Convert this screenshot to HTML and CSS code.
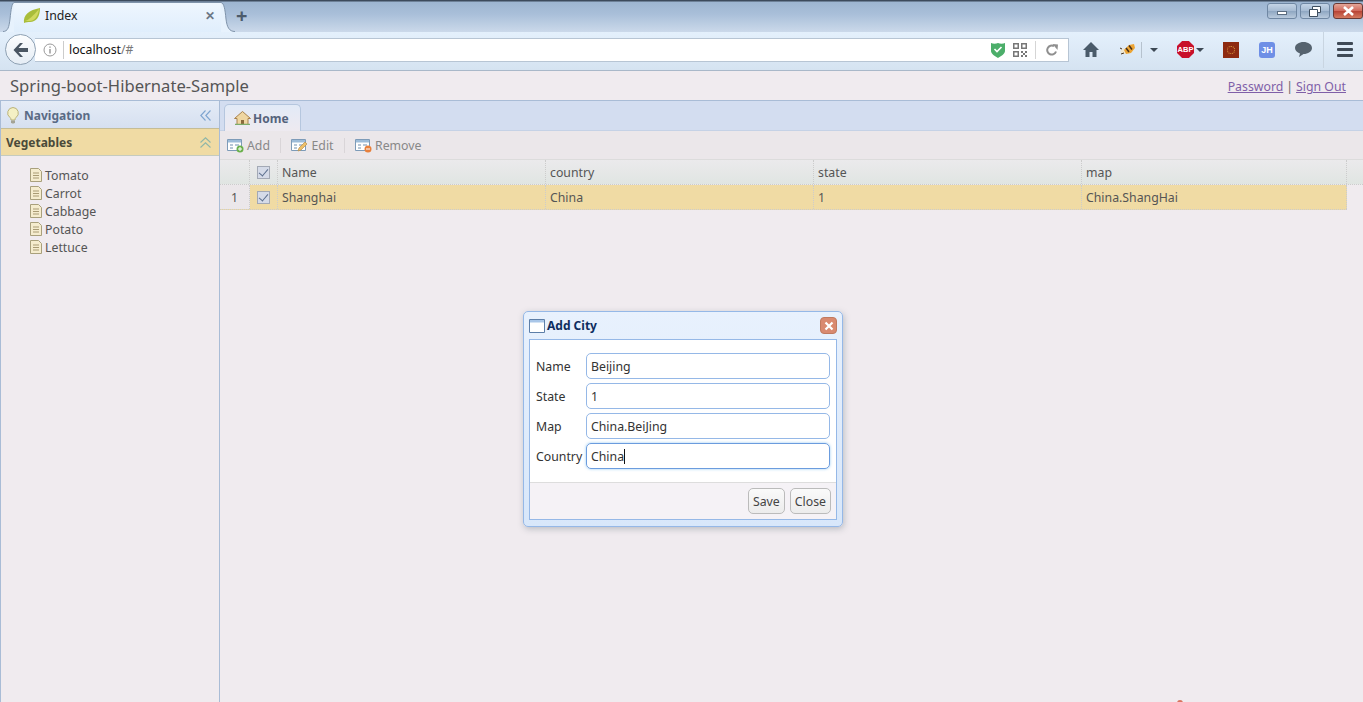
FILE: index.html
```html
<!DOCTYPE html>
<html>
<head>
    <meta charset="UTF-8">
    <title>Index</title>
    <link rel="stylesheet" href="styles.css">
</head>
<body>
    <div class="browser">
        <div class="tabstrip">
            <div class="tab">
                <svg class="tab-curve" width="11" height="30" viewBox="0 0 11 30"><path d="M0 29.500C5 29.500 6 25 7 17 8 7 9 1 11 .5V30H0z" fill="#e7f2fd"/><path d="M0 29.500C5 29.500 6 25 7 17 8 7 9 1 11 .5" fill="none" stroke="#7f93aa"/></svg>
                <div class="tab-main">
                    <svg class="tab-leaf" width="18" height="17" viewBox="0 0 18 17"><path d="M1 16C0 8 6 3 17 1c0 9-4 14-10 14-2 0-4 0-6 1z" fill="#a9bd3a"/><path d="M2 14C6 13 10 9 16 2c-1 8-5 12-9 12-2 0-3 0-5 0z" fill="#d0d95f"/></svg>
                    <span class="tab-title">Index</span>
                    <span class="tab-close">&#10005;</span>
                </div>
                <svg class="tab-curve" width="14" height="30" viewBox="0 0 14 30"><path d="M14 29.500C8 29.500 6 25 5 17 4 7 3 1 0 .5V30H14z" fill="#e7f2fd"/><path d="M14 29.500C8 29.500 6 25 5 17 4 7 3 1 0 .5" fill="none" stroke="#7f93aa"/></svg>
            </div>
            <span class="tab-new">+</span>
            <div class="window-btns">
                <span class="win-btn"><i class="win-min"></i></span>
                <span class="win-btn"><svg width="12" height="11" viewBox="0 0 12 11"><path d="M3.500 3V.5h8v6H9M.5 3.500h8v7h-8z" fill="#fff" stroke="#3f4f60"/></svg></span>
                <span class="win-btn win-close"><svg width="13" height="10" viewBox="0 0 13 10"><path d="M2 1l9 8M11 1L2 9" stroke="#fff" stroke-width="2.600"/></svg></span>
            </div>
        </div>
        <div class="navbar">
            <span class="back-btn">
                <svg width="18" height="16" viewBox="0 0 18 16"><path d="M8 1L1.500 8 8 15h3L6.500 10H16V6H6.500L11 1z" fill="#4a5663"/></svg>
            </span>
            <div class="urlbar">
                <svg class="info-icon" width="14" height="14" viewBox="0 0 14 14"><circle cx="7" cy="7" r="6" fill="none" stroke="#9a9a9a"/><path d="M7 6v4.500M7 3.500v1.300" stroke="#8a8a8a" stroke-width="1.300"/></svg>
                <span class="url"><b>localhost</b>/#</span>
                <svg class="shield" width="14" height="16" viewBox="0 0 14 16"><path d="M0 1c2 1 5 1 7 0 2 1 5 1 7 0v8c0 3-4 5-7 7-3-2-7-4-7-7z" fill="#4cae6a"/><path d="M3.500 7l2.500 2.500L10.500 5" fill="none" stroke="#fff" stroke-width="1.600"/></svg>
                <svg class="qr" width="14" height="14" viewBox="0 0 14 14"><path d="M0 0h6v6H0zM1.500 1.500v3h3v-3zM8 0h6v6H8zM9.500 1.500v3h3v-3zM0 8h6v6H0zM1.500 9.500v3h3v-3zM8 8h2v2H8zM12 8h2v2h-2zM10 10h2v2h-2zM8 12h2v2H8zM12 12h2v2h-2z" fill="#777" fill-rule="evenodd"/></svg>
                <span class="reload">
                    <svg width="12" height="12" viewBox="0 0 12 12"><path d="M10 7.500A4.500 4.500 0 1 1 8 2.200" fill="none" stroke="#8f8f8f" stroke-width="2"/><path d="M6.500 0L12 .5 11.500 6z" fill="#8f8f8f"/></svg>
                </span>
            </div>
            <div class="nav-icons">
                <svg class="home-icon" width="16" height="15" viewBox="0 0 16 15"><path d="M8 0L0 8h2.500v7h4v-5h3v5h4V8H16z" fill="#4a5b6a"/></svg>
                <svg class="bug-icon" width="17" height="13" viewBox="0 0 17 13"><path d="M1 9l3-4 4 2-2 4z" fill="#efe6cf"/><path d="M5 7l5-5 5-1 1 4-4 5-5 1z" fill="#eda534"/><path d="M7 5l3 4M10 2.500l3 4" stroke="#46301a" stroke-width="1.500"/><path d="M1 5l2 1M2 11l3-1" stroke="#46301a"/></svg>
                <i class="nav-sep"></i>
                <i class="caret caret-first"></i>
                <span class="abp">ABP</span>
                <i class="caret"></i>
                <span class="square-red"><i></i></span>
                <span class="square-jh">JH</span>
                <svg class="chat-icon" width="17" height="15" viewBox="0 0 17 15"><path d="M8.500 0C13 0 17 2.500 17 6s-4 6-8.500 6L4 15l1-3.500C2 10.500 0 8.500 0 6c0-3.500 4-6 8.500-6z" fill="#56636f"/></svg>
                <i class="nav-sep nav-sep-menu"></i>
                <span class="menu-icon"><i></i><i></i><i></i></span>
            </div>
        </div>
    </div>

    <div class="page-head">
        <div class="app-title">Spring-boot-Hibernate-Sample</div>
        <div class="user-links"><a href="#">Password</a><span class="link-sep">|</span><a href="#">Sign Out</a></div>
    </div>

    <div class="layout">
        <aside class="sidebar">
            <div class="panel-title">
                <svg class="bulb" width="12" height="17" viewBox="0 0 12 17"><path d="M6 .5a5.500 5.500 0 0 1 3 10c-.7.6-1 1.300-1 2.500H4c0-1.200-.3-1.900-1-2.500a5.500 5.500 0 0 1 3-10z" fill="#f4f0c4" stroke="#b9b27a"/><path d="M4 13.500h4v2l-1 1H5l-1-1z" fill="#a3a396"/></svg>
                <span>Navigation</span>
                <svg class="chevrons" width="11" height="11" viewBox="0 0 11 11"><path d="M5.500 .5L.8 5.500l4.700 5M10.500 .5L5.800 5.500l4.700 5" fill="none" stroke="#7ea5d0" stroke-width="1.100"/></svg>
            </div>
            <div class="accordion-head">
                <span>Vegetables</span>
                <svg class="chevrons" width="11" height="11" viewBox="0 0 11 11"><path d="M.5 5.500L5.500 .8l5 4.700M.5 10.500L5.500 5.800l5 4.700" fill="none" stroke="#8fb6a8" stroke-width="1.100"/></svg>
            </div>
            <ul class="tree">
                <li><svg width="12" height="14" viewBox="0 0 12 14"><use href="#file"/></svg>Tomato</li>
                <li><svg width="12" height="14" viewBox="0 0 12 14"><use href="#file"/></svg>Carrot</li>
                <li><svg width="12" height="14" viewBox="0 0 12 14"><use href="#file"/></svg>Cabbage</li>
                <li><svg width="12" height="14" viewBox="0 0 12 14"><use href="#file"/></svg>Potato</li>
                <li><svg width="12" height="14" viewBox="0 0 12 14"><use href="#file"/></svg>Lettuce</li>
            </ul>
        </aside>

        <main class="content">
            <div class="tabs-bar">
                <div class="home-tab">
                    <svg width="17" height="14" viewBox="0 0 17 14"><path d="M8.500 .5L.5 7.500h2.500v6h11v-6h2.500z" fill="#efd6a2" stroke="#a8824c"/><path d="M7 9h3v4.500H7z" fill="#8a6a3c"/><path d="M1 13.500h15" stroke="#7cab6a" stroke-width="1.500"/></svg>
                    <span>Home</span>
                </div>
            </div>
            <div class="toolbar">
                <span class="tool"><svg width="17" height="15" viewBox="0 0 17 15"><use href="#grid"/><circle cx="13" cy="11" r="3.500" fill="#6ab04c"/><path d="M11 11h4M13 9v4" stroke="#fff"/></svg>Add</span>
                <i class="tool-sep"></i>
                <span class="tool"><svg width="17" height="15" viewBox="0 0 17 15"><use href="#grid"/><path d="M7 13l1-3 6-6 2 2-6 6z" fill="#eec06a" stroke="#b98f4a" stroke-width=".7"/></svg>Edit</span>
                <i class="tool-sep"></i>
                <span class="tool"><svg width="17" height="15" viewBox="0 0 17 15"><use href="#grid"/><circle cx="13" cy="11" r="3.500" fill="#e8803c"/><path d="M11 11h4" stroke="#fff"/></svg>Remove</span>
            </div>
            <div class="grid">
                <div class="grid-row grid-header">
                    <div class="cell cell-num"></div>
                    <div class="cell cell-check"><span class="check"></span></div>
                    <div class="cell cell-data">Name</div>
                    <div class="cell cell-data">country</div>
                    <div class="cell cell-data">state</div>
                    <div class="cell cell-data cell-last">map</div>
                </div>
                <div class="grid-row grid-selected">
                    <div class="cell cell-num">1</div>
                    <div class="cell cell-check"><span class="check"></span></div>
                    <div class="cell cell-data">Shanghai</div>
                    <div class="cell cell-data">China</div>
                    <div class="cell cell-data">1</div>
                    <div class="cell cell-data cell-last">China.ShangHai</div>
                </div>
            </div>
        </main>
    </div>

    <div class="dialog">
        <div class="dialog-title">
            <svg width="16" height="14" viewBox="0 0 16 14"><path d="M.5 .5h15v13H.5z" fill="#fff" stroke="#5c7ea8"/><path d="M1 1h14v2.500H1z" fill="#a9c6e8"/></svg>
            <span>Add City</span>
            <span class="dialog-close"><svg width="10" height="10" viewBox="0 0 10 10"><path d="M1.500 1.500l7 7M8.500 1.500l-7 7" stroke="#fff" stroke-width="2.200"/></svg></span>
        </div>
        <div class="dialog-body">
            <form class="city-form">
                <label>Name</label><div class="field">Beijing</div>
                <label>State</label><div class="field">1</div>
                <label>Map</label><div class="field">China.BeiJing</div>
                <label>Country</label><div class="field field-focus">China<i class="cursor"></i></div>
            </form>
            <div class="dialog-buttons">
                <span class="btn">Save</span>
                <span class="btn">Close</span>
            </div>
        </div>
    </div>

    <i class="red-dot"></i>

    <svg class="defs" width="0" height="0">
        <defs>
            <g id="file"><path d="M.5 .5h8l3 3v10H.5z" fill="#f5ecce" stroke="#a9a07c"/><path d="M3 5h6M3 7.500h6M3 10h6" stroke="#a99b74"/></g>
            <g id="grid"><path d="M.5 1.500h14v11H.5z" fill="#fff" stroke="#7d9bb8"/><path d="M1 2h13v2.500H1z" fill="#9dbcd9"/><path d="M3 7h3M3 10h3M8 7h4" stroke="#6f8fae"/></g>
        </defs>
    </svg>
</body>
</html>
```

FILE: styles.css
```css
* {
    box-sizing: border-box;
}
html, body {
    height: 100%;
}
body {
    margin: 0;
    height: 702px;
    overflow: hidden;
    position: relative;
    display: flex;
    flex-direction: column;
    background: #f0ebef;
    color: #444;
    font-family: "Noto Sans", Arial, sans-serif;
    font-size: 12.3px;
}
i {
    display: block;
}
.defs {
    position: absolute;
}

/* browser chrome */
.browser {
    height: 71px;
    flex: none;
}
.tabstrip {
    height: 32px;
    display: flex;
    align-items: flex-end;
    padding-left: 3px;
    background: linear-gradient(to bottom, #3c4a5c 0, #3c4a5c 1px, #9db5d1 2px, #a9bfd9 14px, #cbd9ea 32px);
}
.tab {
    height: 30px;
    display: flex;
    color: #222;
}
.tab-main {
    width: 207px;
    height: 30px;
    display: flex;
    align-items: center;
    padding: 0 6px 5px 9px;
    border-top: 1px solid #7f93aa;
    background: linear-gradient(to bottom, #eef6fe, #e0eefc);
}
.tab-leaf {
    margin-right: 4px;
}
.tab-title {
    flex: 1;
    font-size: 12.3px;
}
.tab-close {
    font-size: 12px;
    font-weight: bold;
    color: #6b7785;
}
.tab-new {
    margin: 0 0 4px 1px;
    font-size: 20px;
    line-height: 24px;
    color: #4c5b6b;
    font-weight: bold;
}
.window-btns {
    margin-left: auto;
    align-self: flex-start;
    display: flex;
    gap: 3px;
    padding-top: 3px;
}
.win-btn {
    width: 30px;
    height: 16px;
    display: flex;
    align-items: center;
    justify-content: center;
    border: 1px solid #6f87a3;
    border-radius: 3px;
    background: linear-gradient(to bottom, #c4d4e6, #a5bad2 50%, #8fa7c2 52%, #b9cadd);
}
.win-btn.win-close {
    width: 30px;
    margin-right: 0;
    border-color: #6a3a36;
    background: linear-gradient(to bottom, #e4a598, #d0675a 50%, #b84436 52%, #d47a60);
}
.win-min {
    width: 10px;
    height: 4px;
    margin-top: 3px;
    background: #fff;
    border: 1px solid #5a6c80;
}
.navbar {
    height: 39px;
    display: flex;
    align-items: center;
    padding: 0 0 3px 5px;
    border-bottom: 1px solid #a9b8c9;
    background: linear-gradient(to bottom, #e4f0fc, #d5e3f1);
}
.back-btn {
    width: 31px;
    height: 31px;
    flex: none;
    z-index: 1;
    display: flex;
    align-items: center;
    justify-content: center;
    border: 1px solid #8fa1b3;
    border-radius: 50%;
    background: linear-gradient(to bottom, #fcfdfe, #e5edf5);
}
.urlbar {
    width: 1034px;
    height: 24px;
    margin-left: -1px;
    display: flex;
    align-items: center;
    border: 1px solid #b7c5d4;
    border-left: none;
    background: #fff;
}
.info-icon {
    margin-left: 8px;
}
.url {
    margin-left: 6px;
    padding-left: 5px;
    border-left: 1px solid #ccc;
    line-height: 18px;
    flex: 1;
    color: #777;
}
.url b {
    font-weight: normal;
    color: #111;
}
.qr {
    margin-left: 8px;
}
.reload {
    width: 33px;
    height: 18px;
    margin-left: 8px;
    display: flex;
    align-items: center;
    justify-content: center;
    border-left: 1px solid #d5d5d5;
}
.nav-icons {
    flex: 1;
    display: flex;
    align-items: center;
}
.home-icon {
    margin-left: 14px;
}
.bug-icon {
    margin-left: 20px;
}
.nav-sep {
    width: 1px;
    height: 16px;
    margin-left: 5px;
    background: #b6c2ce;
}
.caret {
    width: 0;
    height: 0;
    border: 4px solid transparent;
    border-top: 4px solid #3d4854;
    border-bottom: none;
    margin-left: 2px;
}
.caret-first {
    margin-left: 8px;
}
.abp {
    width: 17px;
    height: 17px;
    margin-left: 19px;
    display: flex;
    align-items: center;
    justify-content: center;
    clip-path: polygon(30% 0, 70% 0, 100% 30%, 100% 70%, 70% 100%, 30% 100%, 0 70%, 0 30%);
    background: #c8102a;
    color: #fff;
    font-size: 7.500px;
    font-weight: bold;
    font-family: "Liberation Sans", sans-serif;
}
.square-red {
    width: 16px;
    height: 16px;
    margin-left: 19px;
    display: flex;
    align-items: center;
    justify-content: center;
    background: #8e2a10;
}
.square-red i {
    width: 8px;
    height: 8px;
    border: 1px dotted #e0a040;
    border-radius: 50%;
}
.square-jh {
    width: 16px;
    height: 16px;
    margin-left: 20px;
    display: flex;
    align-items: center;
    justify-content: center;
    border-radius: 3px;
    background: #6e8fe6;
    color: #fff;
    font-size: 9px;
    font-weight: bold;
    font-family: "Liberation Sans", sans-serif;
}
.chat-icon {
    margin-left: 20px;
}
.nav-sep-menu {
    height: 36px;
    margin-left: 11px;
    background: #c9d5e1;
}
.menu-icon {
    margin-left: 13px;
    display: flex;
    flex-direction: column;
    gap: 3px;
}
.menu-icon i {
    width: 16px;
    height: 3px;
    border-radius: 1px;
    background: #3f4a56;
}

/* page */
.page-head {
    height: 30px;
    flex: none;
    display: flex;
    align-items: center;
    justify-content: space-between;
    padding: 0 17px 0 10px;
    border-bottom: 1px solid #a9bcd6;
}
.app-title {
    font-size: 16.600px;
    color: #555;
}
.user-links {
    padding-top: 2px;
    color: #666;
}
.user-links a {
    color: #7f5fa8;
}
.link-sep {
    margin: 0 3px;
}
.layout {
    flex: 1;
    display: flex;
    min-height: 0;
}
.sidebar {
    width: 220px;
    flex: none;
    border-left: 1px solid #a9bcd6;
    border-right: 1px solid #a9bcd6;
}
.panel-title {
    height: 27px;
    display: flex;
    align-items: center;
    padding: 1px 8px 0 6px;
    background: linear-gradient(to bottom, #e4ebf6, #d6e0f0);
    color: #5a6b85;
    font-size: 12px;
    font-weight: bold;
}
.bulb {
    margin-right: 5px;
}
.chevrons {
    margin-left: auto;
}
.accordion-head {
    height: 28px;
    display: flex;
    align-items: center;
    padding: 0 8px 0 5px;
    border-top: 1px solid #c5bd96;
    border-bottom: 1px solid #c5cbbf;
    background: #f0dba4;
    color: #4a4a3a;
    font-size: 12px;
    font-weight: bold;
}
.tree {
    list-style: none;
    margin: 0;
    padding: 10px 0 0 29px;
}
.tree li {
    height: 18px;
    display: flex;
    align-items: center;
    gap: 3px;
    color: #555;
}
.content {
    flex: 1;
    min-width: 0;
}
.tabs-bar {
    height: 30px;
    padding: 3px 0 0 4px;
    border-bottom: 1px solid #c5d2e6;
    background: #d3ddf0;
}
.home-tab {
    width: 77px;
    height: 27px;
    display: flex;
    align-items: center;
    gap: 2px;
    padding-left: 9px;
    border: 1px solid #b5c6de;
    border-bottom: none;
    border-radius: 5px 5px 0 0;
    background: linear-gradient(to bottom, #e2eaf7, #eeeaf0);
    color: #55637c;
    font-size: 12px;
    font-weight: bold;
}
.toolbar {
    height: 29px;
    display: flex;
    align-items: center;
    padding-left: 7px;
    border-bottom: 1px solid #dcdcdc;
    background: #ebe7ea;
}
.tool {
    display: flex;
    align-items: center;
    gap: 3px;
    color: #888;
}
.tool-sep {
    width: 1px;
    height: 15px;
    margin: 0 10px 0 10.5px;
    background: #d9d5d8;
}
.grid-row {
    display: flex;
    height: 25px;
    border-bottom: 1px dotted #ccc;
}
.grid-header {
    background: linear-gradient(to bottom, #ebeaec, #e0e5e2);
    color: #555;
}
.grid-selected {
    width: 1127px;
    background: #f0dba4;
    color: #555;
}
.cell {
    flex: none;
    display: flex;
    align-items: center;
    border-right: 1px dotted #ccc;
}
.cell-num {
    width: 30px;
    justify-content: center;
    background: #ebe7ea;
    color: #555;
}
.grid-header .cell-num {
    background: none;
}
.cell-check {
    width: 28px;
    justify-content: center;
}
.cell-data {
    width: 268px;
    padding-left: 4px;
}
.cell-last {
    width: 265px;
}
.check {
    width: 13px;
    height: 13px;
    border: 1px solid #a3a9b5;
    background: #d5dbe8;
    position: relative;
}
.check::after {
    content: "";
    position: absolute;
    left: 3px;
    top: 0;
    width: 4px;
    height: 8px;
    border: solid #5c6f8e;
    border-width: 0 1.5px 1.5px 0;
    transform: rotate(40deg);
}

/* dialog */
.dialog {
    position: absolute;
    left: 523px;
    top: 311px;
    width: 320px;
    height: 216px;
    padding: 0 5px 6px;
    border: 1px solid #95b8e7;
    border-radius: 5px;
    background: linear-gradient(to bottom, #e8f1fd, #d8e7fa);
    box-shadow: 1px 2px 6px rgba(120, 130, 140, 0.45);
    display: flex;
    flex-direction: column;
}
.dialog-title {
    height: 27px;
    flex: none;
    display: flex;
    align-items: center;
    gap: 2px;
    color: #0e2d5f;
    font-size: 12px;
    font-weight: bold;
}
.dialog-close {
    width: 17px;
    height: 17px;
    margin: 0 0 0 auto;
    display: flex;
    align-items: center;
    justify-content: center;
    border-radius: 4px;
    background: #d98a70;
    border: 1px solid #c07a60;
}
.dialog-body {
    flex: 1;
    display: flex;
    flex-direction: column;
    border: 1px solid #95b8e7;
    background: #fff;
}
.city-form {
    flex: 1;
    display: grid;
    grid-template-columns: 50px 244px;
    grid-auto-rows: 26px;
    row-gap: 4px;
    align-items: center;
    align-content: start;
    padding: 13px 0 0 6px;
    color: #333;
}
.field {
    height: 26px;
    display: flex;
    align-items: center;
    padding-left: 4px;
    border: 1px solid #95b8e7;
    border-radius: 5px;
    color: #333;
}
.field-focus {
    border-color: #6b9cde;
    box-shadow: 0 0 3px 0 rgba(82, 168, 236, 0.6);
}
.cursor {
    width: 1px;
    height: 15px;
    background: #111;
}
.dialog-buttons {
    height: 37px;
    flex: none;
    display: flex;
    justify-content: flex-end;
    align-items: center;
    gap: 5px;
    padding-right: 5px;
    border-top: 1px solid #ddd;
    background: #f5f2f6;
}
.btn {
    height: 26px;
    padding: 0 4px;
    display: flex;
    align-items: center;
    border: 1px solid #bbb;
    border-radius: 5px;
    background: linear-gradient(to bottom, #fafafa, #ececec);
    color: #444;
}
.red-dot {
    position: absolute;
    left: 1177px;
    top: 700px;
    width: 6px;
    height: 6px;
    border-radius: 50%;
    background: #d9735f;
}
```
